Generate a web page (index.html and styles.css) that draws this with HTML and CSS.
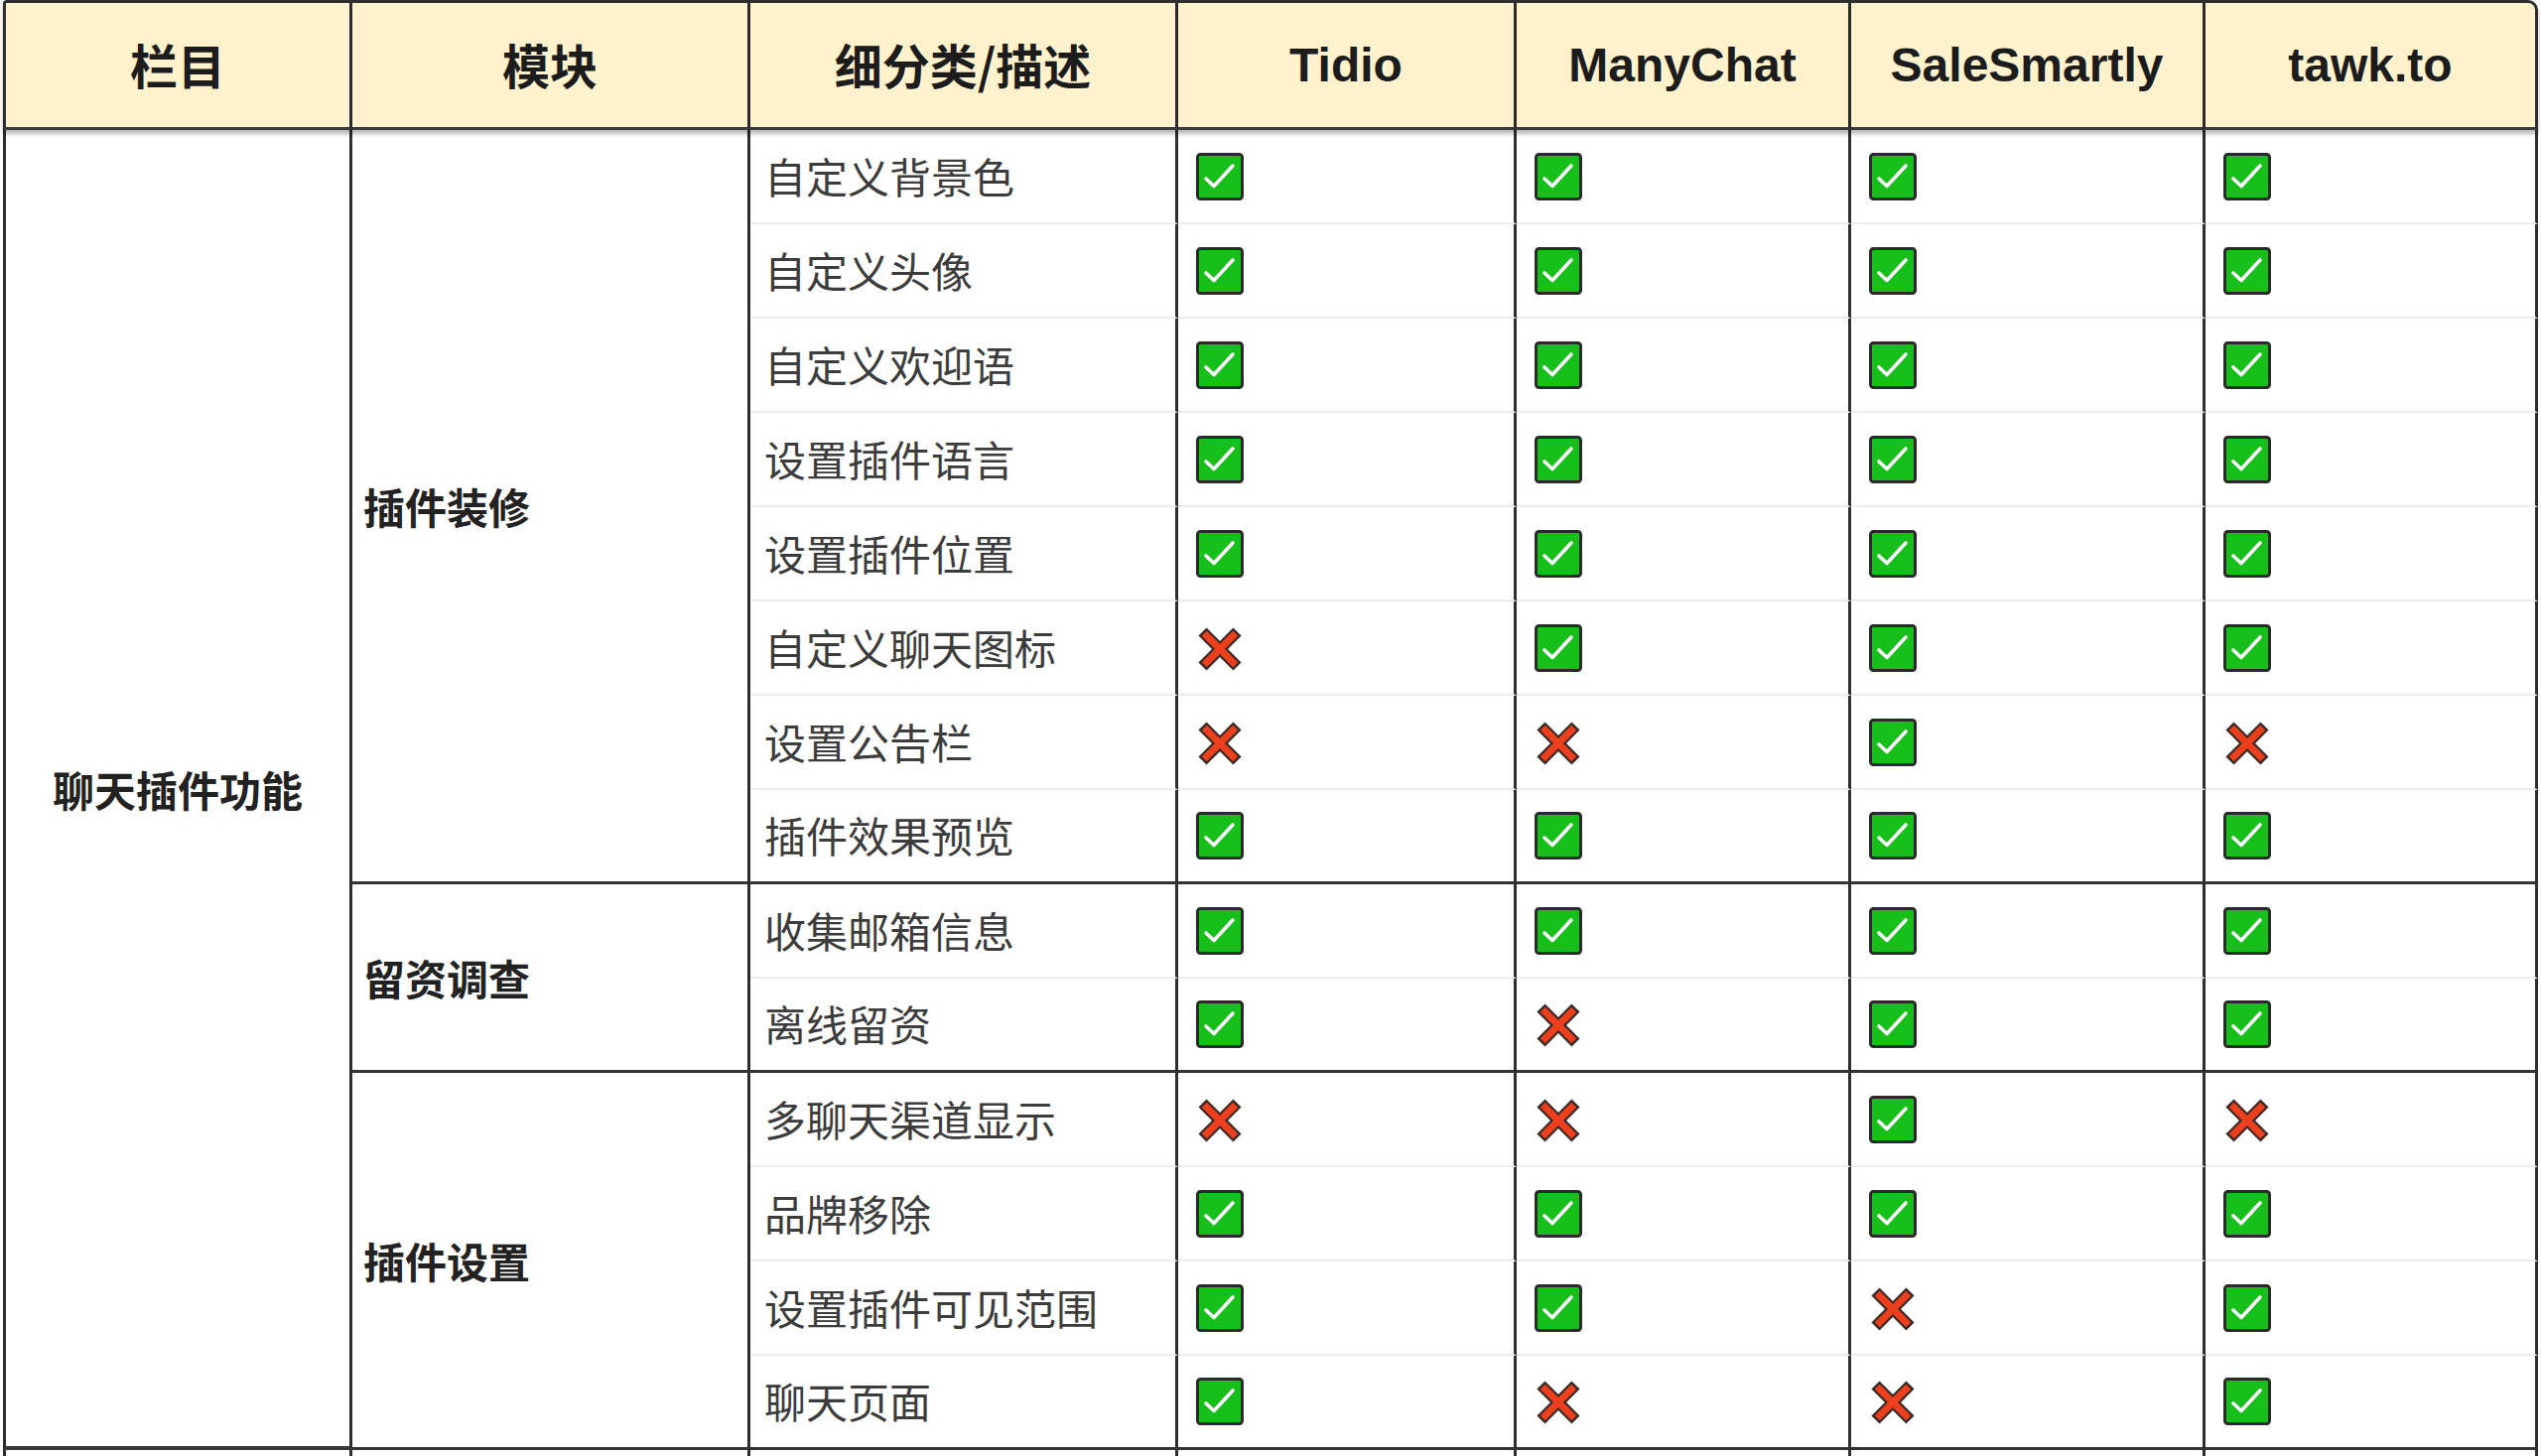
FILE: index.html
```html
<!DOCTYPE html>
<html lang="zh-CN">
<head>
<meta charset="utf-8">
<title>聊天插件功能对比</title>
<link rel="stylesheet" href="styles.css">
</head>
<body>
<svg class="defs" width="0" height="0" aria-hidden="true">
  <symbol id="yes" viewBox="0 0 48 48">
    <rect x="1.5" y="1.5" width="45" height="45" rx="3" fill="#17bf1a" stroke="#2a2a2a" stroke-width="3"/>
    <path d="M10 26 L18 33.5 L37 13" fill="none" stroke="#ffffff" stroke-width="3.6" stroke-linecap="round" stroke-linejoin="round"/>
  </symbol>
  <symbol id="no" viewBox="0 0 48 48">
    <g stroke="#3a2a26" stroke-width="11.5" stroke-linecap="butt">
      <path d="M6.5 7.5 L41.5 42.5"/>
      <path d="M41.5 7.5 L6.5 42.5"/>
    </g>
    <g stroke="#ec3f1d" stroke-width="7" stroke-linecap="butt">
      <path d="M8.3 9.3 L39.7 40.7"/>
      <path d="M39.7 9.3 L8.3 40.7"/>
    </g>
  </symbol>
</svg>

<div class="grid">
  <div class="h first cn">栏目</div>
  <div class="h cn">模块</div>
  <div class="h cn">细分类/描述</div>
  <div class="h">Tidio</div>
  <div class="h">ManyChat</div>
  <div class="h">SaleSmartly</div>
  <div class="h last-col">tawk.to</div>

  <div class="col1 span14">聊天插件功能</div>
  <div class="mod span8">插件装修</div>

  <div class="desc">自定义背景色</div>
  <div class="mark"><svg class="ic"><use href="#yes"/></svg></div>
  <div class="mark"><svg class="ic"><use href="#yes"/></svg></div>
  <div class="mark"><svg class="ic"><use href="#yes"/></svg></div>
  <div class="mark"><svg class="ic"><use href="#yes"/></svg></div>

  <div class="desc">自定义头像</div>
  <div class="mark"><svg class="ic"><use href="#yes"/></svg></div>
  <div class="mark"><svg class="ic"><use href="#yes"/></svg></div>
  <div class="mark"><svg class="ic"><use href="#yes"/></svg></div>
  <div class="mark"><svg class="ic"><use href="#yes"/></svg></div>

  <div class="desc">自定义欢迎语</div>
  <div class="mark"><svg class="ic"><use href="#yes"/></svg></div>
  <div class="mark"><svg class="ic"><use href="#yes"/></svg></div>
  <div class="mark"><svg class="ic"><use href="#yes"/></svg></div>
  <div class="mark"><svg class="ic"><use href="#yes"/></svg></div>

  <div class="desc">设置插件语言</div>
  <div class="mark"><svg class="ic"><use href="#yes"/></svg></div>
  <div class="mark"><svg class="ic"><use href="#yes"/></svg></div>
  <div class="mark"><svg class="ic"><use href="#yes"/></svg></div>
  <div class="mark"><svg class="ic"><use href="#yes"/></svg></div>

  <div class="desc">设置插件位置</div>
  <div class="mark"><svg class="ic"><use href="#yes"/></svg></div>
  <div class="mark"><svg class="ic"><use href="#yes"/></svg></div>
  <div class="mark"><svg class="ic"><use href="#yes"/></svg></div>
  <div class="mark"><svg class="ic"><use href="#yes"/></svg></div>

  <div class="desc">自定义聊天图标</div>
  <div class="mark"><svg class="ic"><use href="#no"/></svg></div>
  <div class="mark"><svg class="ic"><use href="#yes"/></svg></div>
  <div class="mark"><svg class="ic"><use href="#yes"/></svg></div>
  <div class="mark"><svg class="ic"><use href="#yes"/></svg></div>

  <div class="desc">设置公告栏</div>
  <div class="mark"><svg class="ic"><use href="#no"/></svg></div>
  <div class="mark"><svg class="ic"><use href="#no"/></svg></div>
  <div class="mark"><svg class="ic"><use href="#yes"/></svg></div>
  <div class="mark"><svg class="ic"><use href="#no"/></svg></div>

  <div class="desc end">插件效果预览</div>
  <div class="mark end"><svg class="ic"><use href="#yes"/></svg></div>
  <div class="mark end"><svg class="ic"><use href="#yes"/></svg></div>
  <div class="mark end"><svg class="ic"><use href="#yes"/></svg></div>
  <div class="mark end"><svg class="ic"><use href="#yes"/></svg></div>

  <div class="mod span2">留资调查</div>
  <div class="desc">收集邮箱信息</div>
  <div class="mark"><svg class="ic"><use href="#yes"/></svg></div>
  <div class="mark"><svg class="ic"><use href="#yes"/></svg></div>
  <div class="mark"><svg class="ic"><use href="#yes"/></svg></div>
  <div class="mark"><svg class="ic"><use href="#yes"/></svg></div>

  <div class="desc end">离线留资</div>
  <div class="mark end"><svg class="ic"><use href="#yes"/></svg></div>
  <div class="mark end"><svg class="ic"><use href="#no"/></svg></div>
  <div class="mark end"><svg class="ic"><use href="#yes"/></svg></div>
  <div class="mark end"><svg class="ic"><use href="#yes"/></svg></div>

  <div class="mod span4">插件设置</div>
  <div class="desc">多聊天渠道显示</div>
  <div class="mark"><svg class="ic"><use href="#no"/></svg></div>
  <div class="mark"><svg class="ic"><use href="#no"/></svg></div>
  <div class="mark"><svg class="ic"><use href="#yes"/></svg></div>
  <div class="mark"><svg class="ic"><use href="#no"/></svg></div>

  <div class="desc">品牌移除</div>
  <div class="mark"><svg class="ic"><use href="#yes"/></svg></div>
  <div class="mark"><svg class="ic"><use href="#yes"/></svg></div>
  <div class="mark"><svg class="ic"><use href="#yes"/></svg></div>
  <div class="mark"><svg class="ic"><use href="#yes"/></svg></div>

  <div class="desc">设置插件可见范围</div>
  <div class="mark"><svg class="ic"><use href="#yes"/></svg></div>
  <div class="mark"><svg class="ic"><use href="#yes"/></svg></div>
  <div class="mark"><svg class="ic"><use href="#no"/></svg></div>
  <div class="mark"><svg class="ic"><use href="#yes"/></svg></div>

  <div class="desc end">聊天页面</div>
  <div class="mark end"><svg class="ic"><use href="#yes"/></svg></div>
  <div class="mark end"><svg class="ic"><use href="#no"/></svg></div>
  <div class="mark end"><svg class="ic"><use href="#no"/></svg></div>
  <div class="mark end"><svg class="ic"><use href="#yes"/></svg></div>

  <div class="col1 next"></div>
  <div class="mod next"></div>
  <div class="desc next"></div>
  <div class="mark next"></div>
  <div class="mark next"></div>
  <div class="mark next"></div>
  <div class="mark next"></div>
</div>
</body>
</html>
```

FILE: styles.css
```css
html, body {
  margin: 0;
  padding: 0;
  background: #ffffff;
  overflow: hidden;
}

body {
  font-family: "Liberation Sans", "Noto Sans CJK SC", sans-serif;
  color: #222222;
}

.defs {
  position: absolute;
  width: 0;
  height: 0;
  overflow: hidden;
}

.grid {
  display: grid;
  grid-template-columns: 352px 401px 431px 341px 337px 357px 335px;
  grid-template-rows: 131px repeat(14, 95px) 95px;
  margin-left: 3px;
  width: max-content;
}

.grid > div {
  box-sizing: border-box;
  display: flex;
  align-items: center;
  border-right: 3px solid #2e2e2e;
}

.h {
  background: #fff2cc;
  border-top: 3px solid #2e2e2e;
  border-bottom: 3px solid #3a3a3a;
  justify-content: center;
  font-family: "Liberation Sans", "Noto Sans CJK SC", sans-serif;
  font-weight: 700;
  font-size: 48px;
  color: #1c1c1c;
  box-shadow: 0 4px 4px rgba(0, 0, 0, 0.28);
  position: relative;
  z-index: 1;
}

.h.cn {
  font-family: "Noto Sans CJK SC", sans-serif;
  font-size: 48px;
  padding-bottom: 4px;
}

.h.first {
  border-left: 3px solid #2e2e2e;
  border-top-left-radius: 4px;
}

.h.last-col {
  border-top-right-radius: 10px;
}

.col1 {
  border-left: 3px solid #2e2e2e;
  border-bottom: 4px solid #3a3a3a;
  justify-content: center;
  font-family: "Noto Sans CJK SC", sans-serif;
  font-weight: 700;
  font-size: 42px;
  color: #222222;
}

.span14 { grid-row: span 14; }
.span8 { grid-row: span 8; }
.span4 { grid-row: span 4; }
.span2 { grid-row: span 2; }

.mod {
  border-bottom: 3px solid #333333;
  padding-left: 11px;
  font-family: "Noto Sans CJK SC", sans-serif;
  font-weight: 700;
  font-size: 42px;
  color: #222222;
}

.desc {
  border-bottom: 2px solid #ededed;
  padding-left: 14px;
  padding-bottom: 3px;
  font-family: "Noto Sans CJK SC", sans-serif;
  font-weight: 400;
  font-size: 42px;
  color: #3c3c3c;
}

.mark {
  border-bottom: 2px solid #ededed;
  padding-left: 18px;
}

.desc.end,
.mark.end {
  border-bottom: 3px solid #333333;
}

.ic {
  width: 48px;
  height: 48px;
  display: block;
}

.next {
  border-bottom: none;
}
```
